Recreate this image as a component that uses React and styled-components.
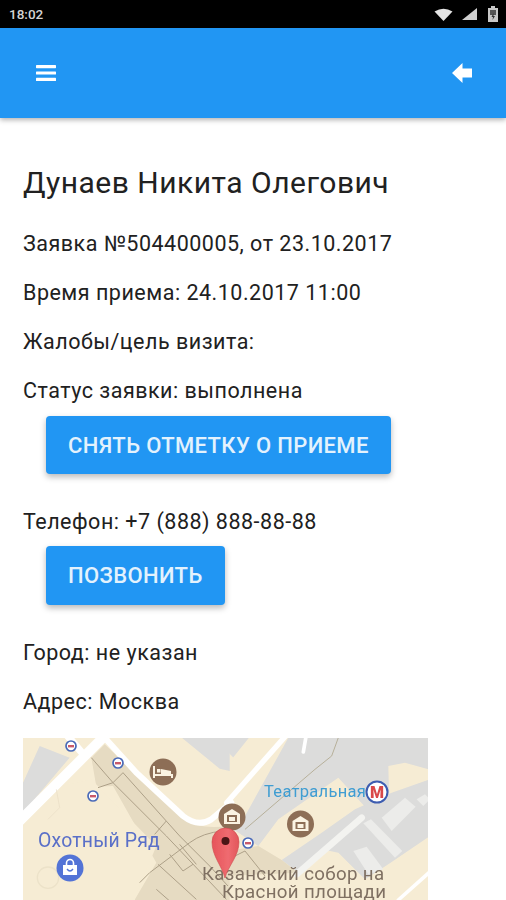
import React from "react";
import styled, { createGlobalStyle } from "styled-components";

const Global = createGlobalStyle`
  html, body { margin: 0; padding: 0; background: #fff; }
  body { font-family: Roboto, "Noto Sans", sans-serif; }
`;
const Page = styled.div`
  width: 506px; height: 900px; overflow: hidden; display: flex; flex-direction: column; background: #fff;
`;
const StatusBar = styled.div`
  height: 28px; flex: none; background: #000; color: #d4d4d4; display: flex; align-items: center;
  justify-content: space-between; padding: 0 8px 0 9px; font-size: 13.5px; font-weight: 500;
`;
const StatusIcons = styled.div`display: flex; align-items: center; gap: 9px;`;
const SignalIcon = styled.svg`margin-right: 2px;`;
const Header = styled.header`
  height: 90px; flex: none; background: #2196f3; display: flex; align-items: center; justify-content: space-between;
  padding: 0 34px 0 36px; box-shadow: 0 2px 5px rgba(0,0,0,.3); position: relative;
`;
const Content = styled.main`
  padding: 43px 0 0 23px; display: flex; flex-direction: column; align-items: flex-start;
`;
const Title = styled.h1`
  margin: 0; font-size: 30px; line-height: 44px; font-weight: 400; color: #212121; letter-spacing: .5px;
`;
const Line = styled.p`
  margin: ${p => p.$top ?? 21}px 0 0; font-size: 21.5px; line-height: 28px; color: #212121; letter-spacing: .5px;
`;
const Btn = styled.button`
  margin: ${p => p.$top}px 0 0 23px; height: ${p => p.$h}px; padding: 0 22px; border: 0; border-radius: 4px; background: #2196f3;
  color: #e3f2fd; font: 500 22px Roboto, sans-serif; letter-spacing: .36px; box-shadow: 0 3px 6px rgba(0,0,0,.28);
`;
const MapBox = styled.div`
  margin-top: 22px; width: 405px; height: 162px; flex: none; overflow: hidden; background: #f6ecd4;
  svg { display: block; }
`;

const Poi = ({ x, y, r = 13.5, fill = "#8d6e57", children }) => (
  <g transform={`translate(${x} ${y})`}>
    <circle r={r} fill={fill} />
    {children}
  </g>
);
const Metro = ({ x, y }) => (
  <g>
    <circle cx={x} cy={y} r="5" fill="#fff" stroke="#4a6ab8" strokeWidth="1.7" />
    <rect x={x - 3} y={y - 1} width="6" height="2.4" fill="#c95a6a" />
  </g>
);
const Museum = () => (
  <path d="M-8 -3 L0 -8 L8 -3 V7 H-8 Z M-5 -2 V5 H5 V-2 Z M-3 0 H3 V4 H-3 Z" fill="#fbf3e2" fillRule="evenodd" />
);
const BASE = "#f6ecd4";
const GREY = "#dcdcdb";
const TAN = "#e6dbc2";
const PATH = "#ada088";
const PALE = "#ececea";

const MapLeft = () => (
  <g transform="translate(23 736) scale(.33333)">
    <path d="M0 140 L50 30 L140 65 L0 230 Z" fill={GREY} />
    <path d="M470 0 H620 V105 L590 98 Z" fill={GREY} />
    <path d="M205 65 L245 25 L490 255 Q530 280 620 270 V500 H330 L400 380 L270 150 L220 152 Z" fill={TAN} />
    <path d="M400 330 L330 500 H0 V260 L110 150 L205 130 Z" fill={BASE} />
    <g fill="none" stroke="#fff" strokeLinecap="round">
      <path d="M-10 255 L250 -5" strokeWidth="30" />
      <path d="M130 -5 L175 48" strokeWidth="22" />
      <path d="M245 5 L340 110 L480 240 Q525 275 565 250 L625 200" strokeWidth="18" />
    </g>
    <g fill="none" stroke={PATH} strokeWidth="3">
      <path d="M205 65 L270 140 L225 155" />
      <path d="M270 140 L300 110 L470 300 L560 390 L615 450" />
      <path d="M270 140 L430 300 L610 490" />
      <path d="M430 255 L395 295" />
      <path d="M600 285 Q540 290 500 320 L380 410 L350 440" />
      <path d="M470 325 L520 385 M440 355 L480 405 L510 385 M405 385 L520 490 M400 460 L440 495" />
    </g>
    <path d="M100 160 L110 215 L75 250" fill="none" stroke="#e8ddc4" strokeWidth="2" />
    <circle cx="75" cy="425" r="32" fill="none" stroke="#ece2c9" strokeWidth="4" />
  </g>
);

const MapRight = () => (
  <g transform="translate(225 736) scale(.33333)">
    <path d="M0 0 H615 V62 L610 100 L540 80 L490 90 L492 170 L420 212 L340 125 L160 250 L100 330 L25 280 L60 240 L190 5 Z" fill={GREY} />
    <path d="M0 -5 H80 L0 95 Z" fill={GREY} />
    <path d="M0 40 L30 70 L0 100 Z" fill={BASE} />
    <path d="M170 372 L290 290 L390 220 L500 170 L615 130 V300 L490 385 L420 430 L340 350 L290 340 L220 410 Z" fill={GREY} />
    <path d="M470 245 L540 185 L572 212 L500 285 Z" fill={PALE} />
    <path d="M575 190 L600 175 L615 190 L595 210 Z" fill={PALE} />
    <path d="M415 262 L438 250 L532 345 L510 365 Z" fill={PALE} />
    <path d="M385 345 L425 332 L475 400 L430 415 Z" fill={PALE} />
    <path d="M-5 370 L40 340 L100 330 L170 372 L220 410 L0 420 Z" fill={TAN} />
    <g fill="none" stroke="#fff" strokeLinecap="round">
      <path d="M180 2 L5 200" strokeWidth="16" />
      <path d="M243 2 L235 48" strokeWidth="11" />
      <path d="M520 492 L612 410" strokeWidth="11" />
    </g>
    <path d="M215 415 L410 245" fill="none" stroke="#f3f3f0" strokeWidth="20" strokeLinecap="round" />
    <path d="M340 5 L320 60 L270 100 L60 280" fill="none" stroke="#b7b09a" strokeWidth="3" />
    <path d="M20 365 L60 345 L120 420" fill="none" stroke={PATH} strokeWidth="3" />
  </g>
);

const MapArt = () => (
  <svg width="405" height="162" viewBox="23 738 405 162">
    <defs>
      <filter id="soft"><feGaussianBlur stdDeviation=".6" /></filter>
      <filter id="softer"><feGaussianBlur stdDeviation=".35" /></filter>
      <linearGradient id="pin" x1="0" x2="1" y1="0" y2="0">
        <stop offset="0" stopColor="#e6545a" />
        <stop offset=".6" stopColor="#ef6b70" />
        <stop offset="1" stopColor="#e2565b" />
      </linearGradient>
    </defs>
    <rect x="23" y="738" width="405" height="162" fill={BASE} />
    <g filter="url(#soft)">
      <MapRight />
      <MapLeft />
    </g>
    <g filter="url(#softer)">
      <Metro x={71} y={746} /><Metro x={118} y={763} /><Metro x={93} y={796} /><Metro x={248} y={843} />
      <Poi x={163} y={772}>
        <path d="M-9 -6 V6 M-9 3 H9 V6" stroke="#fbf3e2" strokeWidth="2" fill="none" />
        <rect x="-6" y="-3" width="3.5" height="3.5" fill="#fbf3e2" />
        <path d="M-2 -3 L8 -1 V2 H-2 Z" fill="#fbf3e2" />
      </Poi>
      <Poi x={232} y={817}><Museum /></Poi>
      <Poi x={300.5} y={824}><Museum /></Poi>
      <Poi x={70} y={868} fill="#5273d6">
        <path d="M-7 -3 H7 V7 H-7 Z" fill="#fff" />
        <path d="M-3.5 -3 V-5 a3.5 3.5 0 0 1 7 0 V-3" fill="none" stroke="#fff" strokeWidth="1.6" />
        <path d="M-3 1 Q0 5 3 1" fill="none" stroke="#5273d6" strokeWidth="1.3" />
      </Poi>
      <text x="264" y="797" fontFamily="Roboto, sans-serif" fontSize="16.5" fill="#3f9dd2" letterSpacing=".3">Театральная</text>
      <circle cx="377" cy="792" r="10.5" fill="#fff" stroke="#3c5cb0" strokeWidth="2" />
      <text x="377" y="798" textAnchor="middle" fontFamily="Roboto, sans-serif" fontWeight="900" fontSize="16" fill="#d94a4a">М</text>
      <text x="38" y="847" fontFamily="Roboto, sans-serif" fontSize="19.4" fill="#5a6fc8" letterSpacing=".2">Охотный Ряд</text>
      <text x="202" y="880" fontFamily="Roboto, sans-serif" fontSize="18.7" fill="#7f7062" letterSpacing=".35">Казанский собор на</text>
      <text x="222" y="898" fontFamily="Roboto, sans-serif" fontSize="18.7" fill="#7f7062" letterSpacing=".35">Красной площади</text>
      <path d="M225 878 C222 866 212 856 212 842 A13.5 14 0 0 1 239 842 C239 856 228 866 225 878 Z" fill="url(#pin)" stroke="#cc4a4e" strokeWidth=".6" />
      <circle cx="225.5" cy="841" r="4" fill="#4a1214" />
    </g>
  </svg>
);

export default function App() {
  return (
    <Page>
      <Global />
      <StatusBar>
        <span>18:02</span>
        <StatusIcons>
          <svg width="19" height="13" viewBox="0 0 19 13"><path d="M0.5 3.5 Q9.5 -2 18.5 3.5 L9.5 13 Z" fill="#e4e4e4" /></svg>
          <SignalIcon width="15" height="12" viewBox="0 0 15 12"><path d="M0 12 L15 0 V12 Z" fill="#d0d0d0" /></SignalIcon>
          <svg width="10" height="16" viewBox="0 0 10 16"><path d="M3 0 H7 V2 H10 V16 H0 V2 H3 Z" fill="#c8c8c8" /><rect x="2" y="4" width="6" height="5" fill="#555" /><path d="M5.5 7 L3.5 11 H5 L4.5 14 L7 10 H5.5 Z" fill="#333" /></svg>
        </StatusIcons>
      </StatusBar>
      <Header>
        <svg width="20" height="16" viewBox="0 0 20 16" fill="#fff"><rect y="0" width="20" height="3.2" rx=".6" /><rect y="6.4" width="20" height="3.2" rx=".6" /><rect y="12.8" width="20" height="3.2" rx=".6" /></svg>
        <svg width="20" height="20" viewBox="0 0 20 20" fill="#fff"><path d="M0 10 L10.5 0 V5.5 H20 V14.5 H10.5 V20 Z" /></svg>
      </Header>
      <Content>
        <Title>Дунаев Никита Олегович</Title>
        <Line $top={25}>Заявка №504400005, от 23.10.2017</Line>
        <Line>Время приема: 24.10.2017 11:00</Line>
        <Line>Жалобы/цель визита:</Line>
        <Line>Статус заявки: выполнена</Line>
        <Btn $top={11} $h={58}>СНЯТЬ ОТМЕТКУ О ПРИЕМЕ</Btn>
        <Line $top={34}>Телефон: +7 (888) 888-88-88</Line>
        <Btn $top={10} $h={59}>ПОЗВОНИТЬ</Btn>
        <Line $top={34}>Город: не указан</Line>
        <Line>Адрес: Москва</Line>
        <MapBox><MapArt /></MapBox>
      </Content>
    </Page>
  );
}
